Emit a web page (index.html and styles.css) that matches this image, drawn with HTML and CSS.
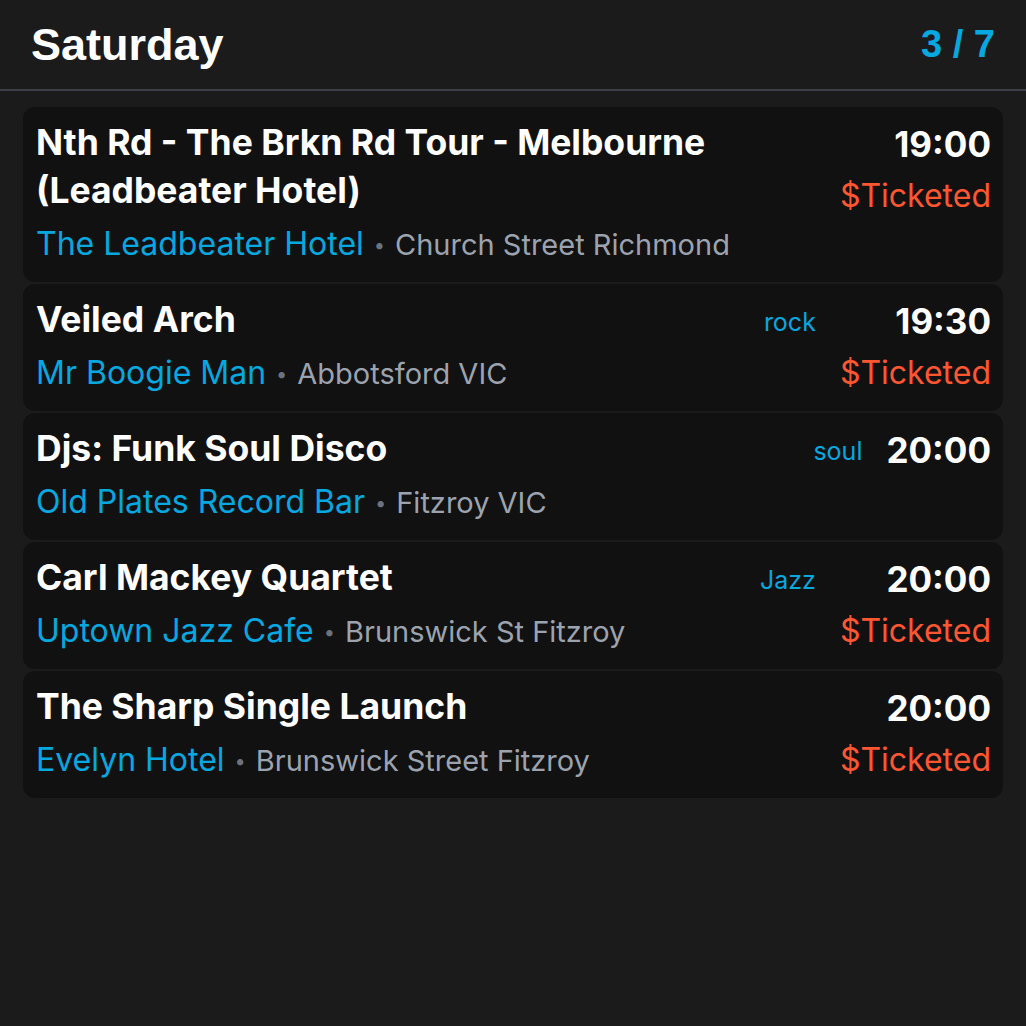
FILE: index.html
```html
<!DOCTYPE html>
<html lang="en">
<head>
<meta charset="utf-8">
<title>Saturday</title>
<link rel="stylesheet" href="styles.css">
</head>
<body>
<header class="day-header">
  <h1 class="day-title">Saturday</h1>
  <div class="day-count">3 / 7</div>
</header>
<main class="event-list">
  <article class="event">
    <div class="event-main">
      <div class="event-title">Nth Rd - The Brkn Rd Tour - Melbourne (Leadbeater Hotel)</div>
      <div class="event-venue"><span class="venue-name">The Leadbeater Hotel</span><span class="sep">•</span><span class="venue-loc">Church Street Richmond</span></div>
    </div>
    <div class="event-side">
      <div class="event-time">19:00</div>
      <div class="event-price">$Ticketed</div>
    </div>
  </article>
  <article class="event">
    <div class="event-main">
      <div class="event-title">Veiled Arch</div>
      <div class="event-venue"><span class="venue-name">Mr Boogie Man</span><span class="sep">•</span><span class="venue-loc">Abbotsford VIC</span></div>
    </div>
    <div class="event-genre">rock</div>
    <div class="event-side">
      <div class="event-time">19:30</div>
      <div class="event-price">$Ticketed</div>
    </div>
  </article>
  <article class="event">
    <div class="event-main">
      <div class="event-title">Djs: Funk Soul Disco</div>
      <div class="event-venue"><span class="venue-name">Old Plates Record Bar</span><span class="sep">•</span><span class="venue-loc">Fitzroy VIC</span></div>
    </div>
    <div class="event-genre">soul</div>
    <div class="event-side">
      <div class="event-time">20:00</div>
    </div>
  </article>
  <article class="event">
    <div class="event-main">
      <div class="event-title">Carl Mackey Quartet</div>
      <div class="event-venue"><span class="venue-name">Uptown Jazz Cafe</span><span class="sep">•</span><span class="venue-loc">Brunswick St Fitzroy</span></div>
    </div>
    <div class="event-genre">Jazz</div>
    <div class="event-side">
      <div class="event-time">20:00</div>
      <div class="event-price">$Ticketed</div>
    </div>
  </article>
  <article class="event">
    <div class="event-main">
      <div class="event-title">The Sharp Single Launch</div>
      <div class="event-venue"><span class="venue-name">Evelyn Hotel</span><span class="sep">•</span><span class="venue-loc">Brunswick Street Fitzroy</span></div>
    </div>
    <div class="event-side">
      <div class="event-time">20:00</div>
      <div class="event-price">$Ticketed</div>
    </div>
  </article>
</main>
</body>
</html>
```
FILE: styles.css
```css
html, body {
  margin: 0;
  padding: 0;
  background: #1b1b1b;
  height: 100%;
}
body {
  font-family: Inter, "Noto Sans", sans-serif;
  color: #ffffff;
}
.day-header {
  display: flex;
  justify-content: space-between;
  align-items: center;
  height: 91px;
  padding: 0 31px 0 31px;
  border-bottom: 2px solid #3a3f48;
  box-sizing: border-box;
}
.day-title {
  margin: 0;
  font-family: "Liberation Sans", Arial, sans-serif;
  font-weight: 700;
  font-size: 45px;
  line-height: 1;
  color: #ffffff;
}
.day-count {
  font-family: "Liberation Sans", Arial, sans-serif;
  font-weight: 700;
  font-size: 38px;
  line-height: 1;
  color: #06a8e0;
  padding-bottom: 2px;
}
.event-list {
  display: flex;
  flex-direction: column;
  gap: 2px;
  padding: 16px 23px 0 23px;
}
.event {
  display: flex;
  align-items: flex-start;
  gap: 24px;
  background: #111111;
  border-radius: 12px;
  padding: 12px 12px 8px 13px;
}
.event-main {
  flex: 1;
  min-width: 0;
}
.event-title {
  font-weight: 700;
  font-size: 35.5px;
  line-height: 48px;
  color: #ffffff;
}
.event-venue {
  font-size: 32px;
  line-height: 58px;
  white-space: nowrap;
}
.venue-name {
  color: #06a8e0;
}
.sep {
  color: #6b7280;
  font-size: 20px;
  margin: 0 10px;
  vertical-align: 3px;
}
.venue-loc {
  color: #9ca3af;
  font-size: 29px;
}
.event-genre {
  font-size: 25px;
  line-height: 48px;
  color: #06a8e0;
  padding-top: 2px;
}
.event-side {
  display: flex;
  flex-direction: column;
  align-items: flex-end;
}
.event-time {
  font-weight: 700;
  font-size: 35px;
  line-height: 50px;
  color: #ffffff;
}
.event-price {
  font-size: 32px;
  line-height: 54px;
  color: #ff5632;
}
```
